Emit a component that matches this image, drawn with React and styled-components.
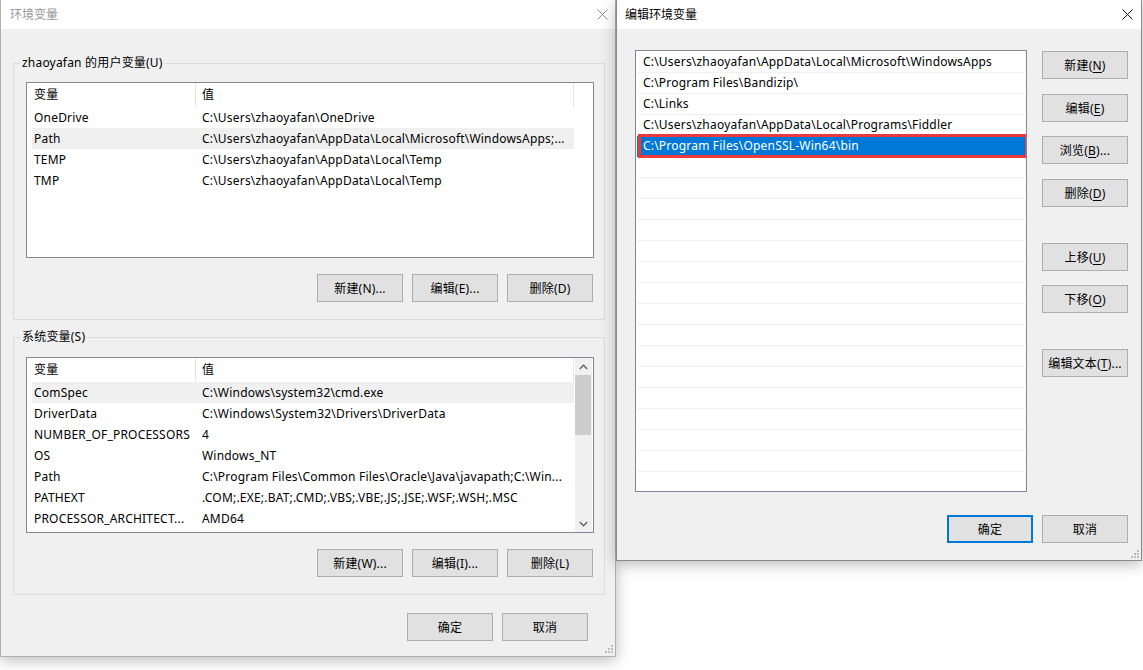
import React from "react";
import styled, { createGlobalStyle } from "styled-components";

const FONT = `"Noto Sans", "Noto Sans CJK SC", sans-serif`;

const GlobalStyle = createGlobalStyle`
  html, body { margin: 0; padding: 0; background: #fff; }
  body { font-family: ${FONT}; font-size: 12px; letter-spacing: 0.2px; color: #000; }
  * { box-sizing: border-box; }
`;

const Desktop = styled.div`
  position: relative;
  width: 1143px;
  height: 670px;
  overflow: hidden;
  background: #fff;
`;

const Window = styled.div`
  position: absolute;
  top: 0;
  left: ${(p) => p.$x}px;
  width: ${(p) => p.$w}px;
  height: ${(p) => p.$h}px;
  border: 1px solid ${(p) => (p.$active ? "#8a8a8a" : "#b0b0b0")};
  border-top: none;
  background: #f0f0f0;
  box-shadow: 0 3px 14px rgba(0, 0, 0, 0.28);
  display: flex;
  flex-direction: column;
  z-index: ${(p) => (p.$active ? 2 : 1)};
`;

const TitleBar = styled.div`
  height: 29px;
  flex: none;
  background: #fff;
  display: flex;
  align-items: center;
  justify-content: space-between;
  padding: 0 ${(p) => p.$pr}px 1px ${(p) => p.$pl}px;
  color: ${(p) => (p.$active ? "#000" : "#999")};
  font-size: 12px;
  letter-spacing: 0;
`;

const Client = styled.div`
  flex: 1;
  display: flex;
  flex-direction: column;
  padding: ${(p) => p.$pad};
`;

const GroupBox = styled.fieldset`
  margin: ${(p) => p.$mt}px 0 0 0;
  padding: 0;
  border: 1px solid #dcdcdc;
  min-width: 0;
`;

const Legend = styled.legend`
  margin-left: 6px;
  padding: 0 2px;
  line-height: 16px;
  font-size: 12px;
`;

const GroupBody = styled.div`
  padding: ${(p) => p.$pt}px 10px 17px 12px;
`;

const ListView = styled.div`
  height: ${(p) => p.$h}px;
  border: 1px solid #828790;
  background: #fff;
  display: flex;
  overflow: hidden;
`;

const Columns = styled.div`
  width: 547px;
  flex: none;
  display: flex;
  flex-direction: column;
`;

const HeaderRow = styled.div`
  height: 24px;
  display: flex;
  flex: none;
`;

const HeadCell = styled.div`
  width: ${(p) => (p.$w ? `${p.$w}px` : "auto")};
  flex: ${(p) => (p.$w ? "none" : 1)};
  padding-left: ${(p) => p.$pl}px;
  line-height: 24px;
  border-right: 1px solid #e5e5e5;
`;

const Row = styled.div`
  height: 21px;
  margin-left: 5px;
  display: flex;
  background: ${(p) => (p.$hl ? "#f0f0f0" : "transparent")};
  line-height: 21px;
  white-space: nowrap;
`;

const NameCell = styled.div`
  width: 163px;
  flex: none;
  padding-left: 2px;
  overflow: hidden;
`;

const ValueCell = styled.div`
  flex: 1;
  padding-left: 7px;
  overflow: hidden;
`;

const ScrollTrack = styled.div`
  flex: 1;
  display: flex;
  flex-direction: column;
  padding-left: 1px;
`;

const Scrollbar = styled.div`
  flex: 1;
  display: flex;
  flex-direction: column;
  background: #f0f0f0;
  margin-right: 1px;
`;

const ArrowBtn = styled.div`
  height: 17px;
  flex: none;
  display: flex;
  align-items: center;
  justify-content: center;
`;

const Thumb = styled.div`
  height: 60px;
  flex: none;
  margin: 0 1px 0 0;
  background: #cdcdcd;
`;

const Spacer = styled.div`
  flex: 1;
`;

const ButtonRow = styled.div`
  display: flex;
  justify-content: flex-end;
  gap: 9px;
  margin-top: ${(p) => p.$mt}px;
  padding-right: ${(p) => p.$pr || 0}px;
`;

const Button = styled.div`
  width: 86px;
  height: 28px;
  flex: none;
  display: flex;
  align-items: center;
  justify-content: center;
  background: #e1e1e1;
  border: ${(p) => (p.$default ? "2px solid #0078d7" : "1px solid #adadad")};
  margin-top: ${(p) => p.$mt || 0}px;
  font-size: 12px;
  white-space: nowrap;
`;

const Mn = styled.span`
  text-decoration: underline;
  text-underline-offset: 2px;
`;

const EditBody = styled.div`
  display: flex;
  gap: 15px;
`;

const PathList = styled.div`
  width: 392px;
  height: 442px;
  flex: none;
  border: 1px solid #828790;
  background: #fff;
  padding-top: 1px;
  overflow: hidden;
`;

const PathRow = styled.div`
  position: relative;
  height: 21px;
  margin: 0 1px;
  padding-left: 6px;
  line-height: 20px;
  border-bottom: 1px solid ${(p) => (p.$sel ? "#0078d7" : "#f0f0f0")};
  background: ${(p) => (p.$sel ? "#0078d7" : "transparent")};
  color: ${(p) => (p.$sel ? "#fff" : "#000")};
  white-space: nowrap;

  &::after {
    content: "";
    display: ${(p) => (p.$sel ? "block" : "none")};
    position: absolute;
    inset: -2px -3px -2px 1px;
    border: 3px solid #ec393c;
  }
`;

const SideButtons = styled.div`
  display: flex;
  flex-direction: column;
`;

const Grip = styled.svg`
  position: absolute;
  right: ${(p) => p.$r}px;
  bottom: ${(p) => p.$b}px;
`;

const CloseX = ({ color }) => (
  <svg width="11" height="11" viewBox="0 0 11 11">
    <path d="M0.5 0.5 L10.5 10.5 M10.5 0.5 L0.5 10.5" stroke={color} strokeWidth="1" fill="none" />
  </svg>
);

const SizeGrip = ({ r, b }) => (
  <Grip $r={r} $b={b} width="8" height="8" viewBox="0 0 8 8">
    {[
      [6, 0],
      [3, 3],
      [6, 3],
      [0, 6],
      [3, 6],
      [6, 6],
    ].map(([x, y]) => (
      <rect key={`${x}-${y}`} x={x} y={y} width="2" height="2" fill="#bcbcbc" />
    ))}
  </Grip>
);

const Chevron = ({ up }) => (
  <svg width="9" height="6" viewBox="0 0 9 6">
    <path
      d={up ? "M0.8 5 L4.5 1.3 L8.2 5" : "M0.8 1 L4.5 4.7 L8.2 1"}
      stroke="#606060"
      strokeWidth="1.4"
      fill="none"
    />
  </svg>
);

const userVars = [
  ["OneDrive", "C:\\Users\\zhaoyafan\\OneDrive"],
  ["Path", "C:\\Users\\zhaoyafan\\AppData\\Local\\Microsoft\\WindowsApps;...", true],
  ["TEMP", "C:\\Users\\zhaoyafan\\AppData\\Local\\Temp"],
  ["TMP", "C:\\Users\\zhaoyafan\\AppData\\Local\\Temp"],
];

const systemVars = [
  ["ComSpec", "C:\\Windows\\system32\\cmd.exe", true],
  ["DriverData", "C:\\Windows\\System32\\Drivers\\DriverData"],
  ["NUMBER_OF_PROCESSORS", "4"],
  ["OS", "Windows_NT"],
  ["Path", "C:\\Program Files\\Common Files\\Oracle\\Java\\javapath;C:\\Win..."],
  ["PATHEXT", ".COM;.EXE;.BAT;.CMD;.VBS;.VBE;.JS;.JSE;.WSF;.WSH;.MSC"],
  ["PROCESSOR_ARCHITECT...", "AMD64"],
];

const paths = [
  "C:\\Users\\zhaoyafan\\AppData\\Local\\Microsoft\\WindowsApps",
  "C:\\Program Files\\Bandizip\\",
  "C:\\Links",
  "C:\\Users\\zhaoyafan\\AppData\\Local\\Programs\\Fiddler",
  "C:\\Program Files\\OpenSSL-Win64\\bin",
];

const VarList = ({ rows, height, scroll }) => (
  <ListView $h={height}>
    <Columns>
      <HeaderRow>
        <HeadCell $w={169} $pl={7}>变量</HeadCell>
        <HeadCell $pl={6}>值</HeadCell>
      </HeaderRow>
      {rows.map(([name, value, hl]) => (
        <Row key={name + value} $hl={hl}>
          <NameCell>{name}</NameCell>
          <ValueCell>{value}</ValueCell>
        </Row>
      ))}
    </Columns>
    <ScrollTrack>
      {scroll && (
        <Scrollbar>
          <ArrowBtn>
            <Chevron up />
          </ArrowBtn>
          <Thumb />
          <Spacer />
          <ArrowBtn>
            <Chevron />
          </ArrowBtn>
        </Scrollbar>
      )}
    </ScrollTrack>
  </ListView>
);

const App = () => {
  const rows = [];
  for (let i = 0; i < 21; i++) rows.push(paths[i] || "");

  return (
    <Desktop>
      <GlobalStyle />

      <Window $x={0} $w={616} $h={657}>
        <TitleBar $pl={9} $pr={7}>
          <span>环境变量</span>
          <CloseX color="#8c8c8c" />
        </TitleBar>
        <Client $pad="26px 10px 0 12px">
          <GroupBox $mt={0}>
            <Legend>zhaoyafan 的用户变量(U)</Legend>
            <GroupBody $pt={11}>
              <VarList rows={userVars} height={176} />
              <ButtonRow $mt={16} $pr={1}>
                <Button>新建(N)...</Button>
                <Button>编辑(E)...</Button>
                <Button>删除(D)</Button>
              </ButtonRow>
            </GroupBody>
          </GroupBox>
          <GroupBox $mt={9}>
            <Legend>系统变量(S)</Legend>
            <GroupBody $pt={12}>
              <VarList rows={systemVars} height={176} scroll />
              <ButtonRow $mt={16} $pr={1}>
                <Button>新建(W)...</Button>
                <Button>编辑(I)...</Button>
                <Button>删除(L)</Button>
              </ButtonRow>
            </GroupBody>
          </GroupBox>
          <ButtonRow $mt={18} $pr={17}>
            <Button>确定</Button>
            <Button>取消</Button>
          </ButtonRow>
        </Client>
        <SizeGrip r={2} b={3} />
      </Window>

      <Window $x={616} $w={526} $h={561} $active>
        <TitleBar $pl={8} $pr={8} $active>
          <span>编辑环境变量</span>
          <CloseX color="#111" />
        </TitleBar>
        <Client $pad="21px 13px 0 18px">
          <EditBody>
            <PathList>
              {rows.map((p, i) => (
                <PathRow key={i} $sel={i === 4}>
                  {p}
                </PathRow>
              ))}
            </PathList>
            <SideButtons>
              <Button $mt={1}>
                新建(<Mn>N</Mn>)
              </Button>
              <Button $mt={15}>
                编辑(<Mn>E</Mn>)
              </Button>
              <Button $mt={14}>
                浏览(<Mn>B</Mn>)...
              </Button>
              <Button $mt={15}>
                删除(<Mn>D</Mn>)
              </Button>
              <Button $mt={36}>
                上移(<Mn>U</Mn>)
              </Button>
              <Button $mt={14}>
                下移(<Mn>O</Mn>)
              </Button>
              <Button $mt={36}>
                编辑文本(<Mn>T</Mn>)...
              </Button>
            </SideButtons>
          </EditBody>
          <ButtonRow $mt={23}>
            <Button $default>确定</Button>
            <Button>取消</Button>
          </ButtonRow>
        </Client>
        <SizeGrip r={2} b={2} />
      </Window>
    </Desktop>
  );
};

export default App;
